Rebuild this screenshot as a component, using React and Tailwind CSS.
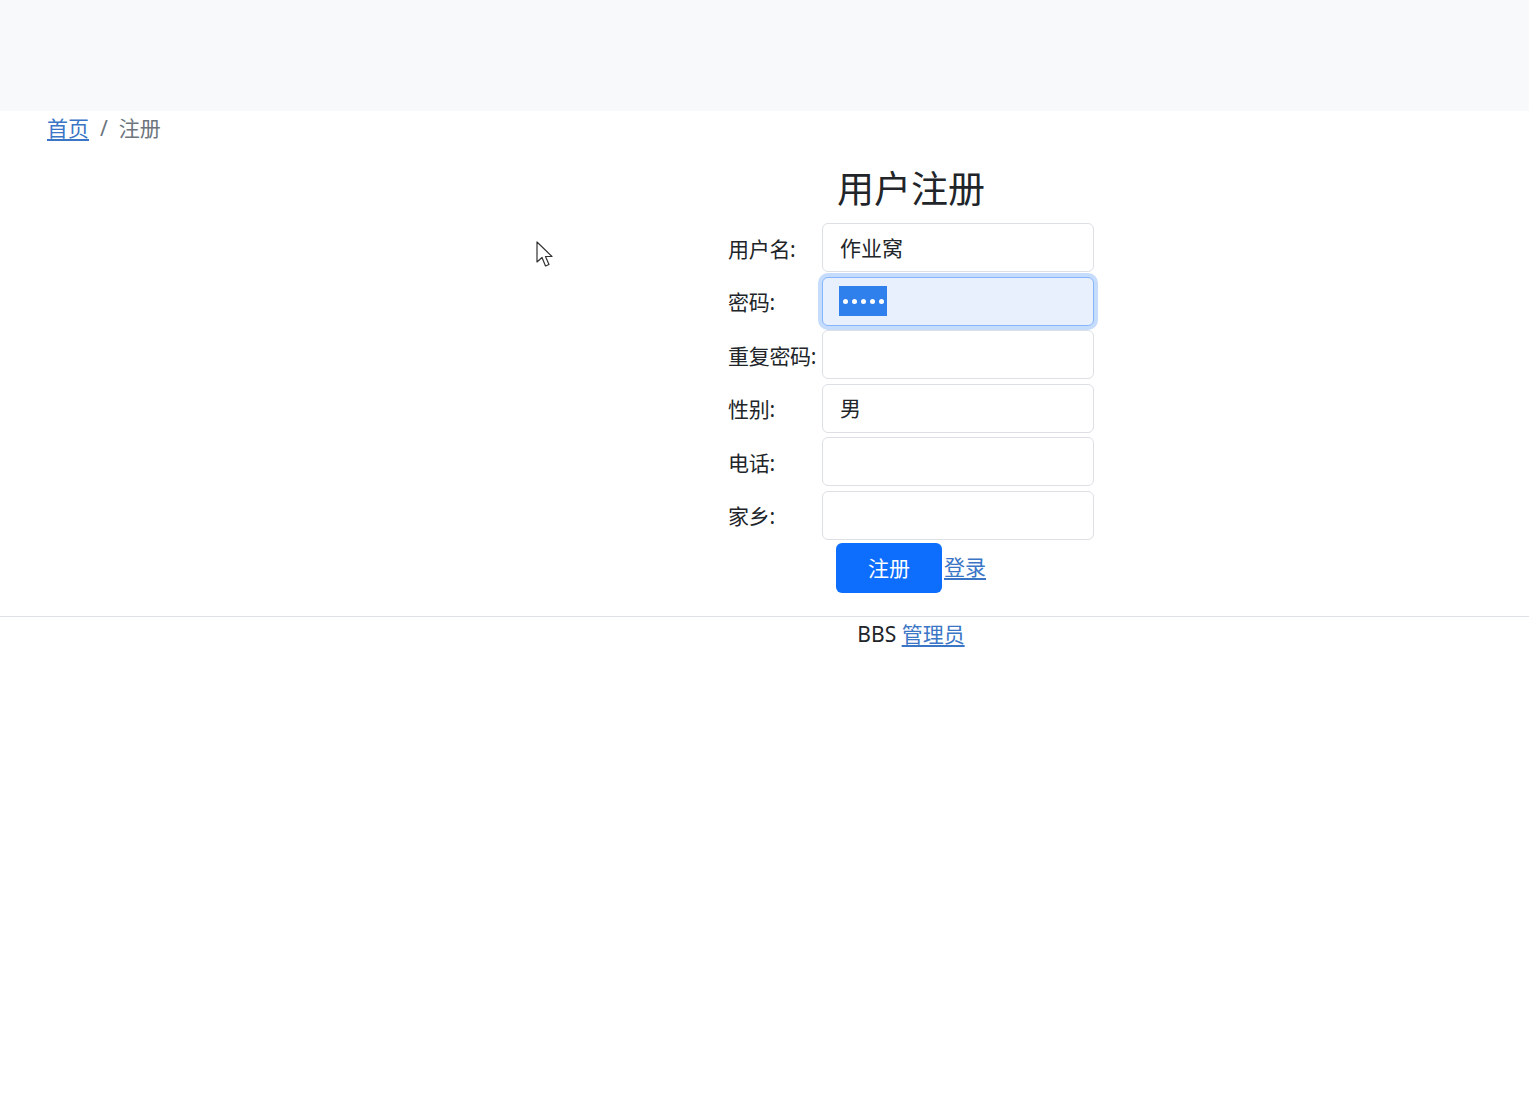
const font = { fontFamily: '"Noto Sans", "Noto Sans CJK SC", sans-serif' };

const Field = ({ label, value, children }) => (
  <div className="flex items-center">
    <div className="w-[94px] pt-[3px] text-[21px] text-[#212529] leading-none whitespace-nowrap tracking-[-0.3px]">{label}</div>
    {children || (
      <div className="w-[272px] h-[49px] border border-[#dcdfe3] rounded-[6px] bg-white pl-[17px] pt-[2px] flex items-center text-[21px] text-[#212529]">
        {value}
      </div>
    )}
  </div>
);

const App = () => {
  return (
    <div className="relative min-h-[1113px] bg-white" style={font}>
      <div className="h-[111px] bg-[#f8f9fa]"></div>

      <div className="pl-[47px] mt-[3px] h-[30px] flex items-center text-[21px]">
        <a href="#" className="text-[#3b76c6] underline underline-offset-[3px]">首页</a>
        <span className="text-[#6c757d] px-[11px]">/</span>
        <span className="text-[#6c757d]">注册</span>
      </div>

      <div className="pl-[293px]">
        <div className="flex flex-col items-center">
          <h2 className="mt-[23px] text-[37px] leading-[43px] text-[#212529]">用户注册</h2>

          <div className="mt-[13px] flex flex-col gap-[4.5px]">
            <Field label="用户名:" value="作业窝" />
            <Field label="密码:">
              <div className="w-[272px] h-[49px] border border-[#86b7fe] rounded-[6px] bg-[#e8f0fe] pl-[16px] flex items-center ring-[4px] ring-[#c5dcfc]">
                <span className="bg-[#2f80ed] h-[30px] w-[48px] flex items-center justify-center gap-[4px] pt-[1px]">
                  <i className="w-[5px] h-[5px] rounded-full bg-white"></i>
                  <i className="w-[5px] h-[5px] rounded-full bg-white"></i>
                  <i className="w-[5px] h-[5px] rounded-full bg-white"></i>
                  <i className="w-[5px] h-[5px] rounded-full bg-white"></i>
                  <i className="w-[5px] h-[5px] rounded-full bg-white"></i>
                </span>
              </div>
            </Field>
            <Field label="重复密码:" value="" />
            <Field label="性别:" value="男" />
            <Field label="电话:" value="" />
            <Field label="家乡:" value="" />
          </div>

          <div className="mt-[3px] flex items-center w-[366px] pl-[108px]">
            <button className="w-[106px] h-[50px] bg-[#0d6efd] text-white text-[21px] rounded-[6px] pt-[2px]">注册</button>
            <a href="#" className="ml-[2px] text-[21px] text-[#3b76c6] underline underline-offset-[3px]">登录</a>
          </div>
        </div>
      </div>

      <div className="mt-[23px] border-t border-[#dee2e6]"></div>

      <div className="pl-[293px]">
        <div className="text-center text-[21px] leading-[34px] text-[#212529]">
          BBS <a href="#" className="text-[#3b76c6] underline underline-offset-[3px]">管理员</a>
        </div>
      </div>

      <svg className="absolute left-[536px] top-[241px]" width="19" height="27" viewBox="0 0 19 27">
        <path d="M1 1 L1 21 L6 16.5 L9.5 25 L13 23.5 L9.5 15.5 L16 15.5 Z" fill="white" stroke="#333" strokeWidth="1.2" strokeLinejoin="round" />
      </svg>
    </div>
  );
};

export default App;
